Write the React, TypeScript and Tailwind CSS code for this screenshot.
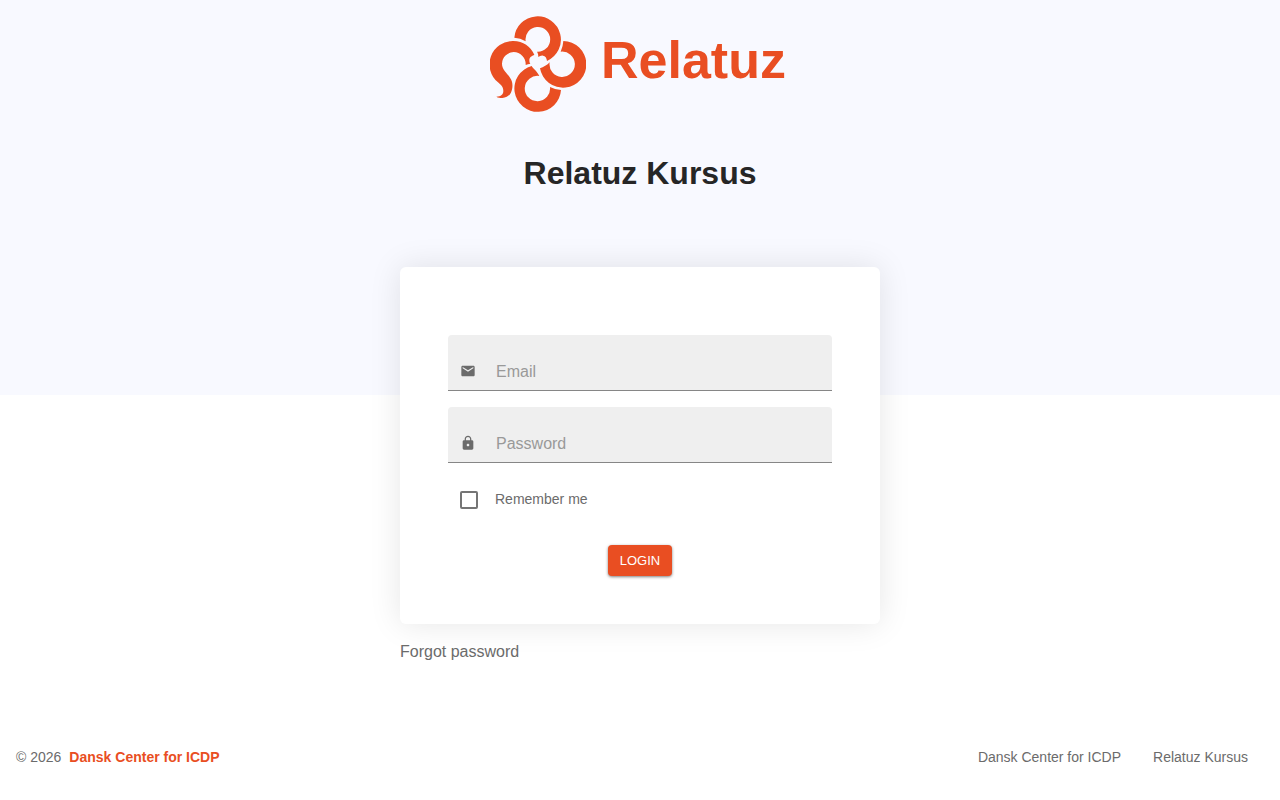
import { MdEmail, MdLock } from "react-icons/md";
import type { IconType } from "react-icons";

function Logo() {
  return (
    <div className="flex h-24 w-75 items-center gap-[15px] text-[#e94e22]">
      <svg viewBox="30 33 288 288" className="size-24 shrink-0" fill="currentColor" aria-hidden="true">
        <path d="M103 98 A70 70 0 1 1 201 168 C200 158 196 153 189 152 C183 151 179 154 175 156 C175 150 174 145 171 140 A37 37 0 1 0 137 109 Q121 99 103 98Z" />
        <path d="M250 108 A70 70 0 1 1 180 190 C190 186 202 180 209 172 A38 38 0 1 0 242 140 Q249 125 250 108Z" />
        <path d="M243 255 A70 70 0 1 1 155 183 C159 191 171 198 178 213 A38 38 0 1 0 210 246 Q225 254 243 255Z" />
        <path d="M137 180 A37 37 0 0 0 101 141 A36 36 0 0 0 66 176 C66 184 69 191 74 198 C79 205 86 211 91 220 C97 229 98 238 97 248 C95 266 84 279 67 279 C60 279 54 278 49 275 C63 275 70 268 70 258 C70 246 63 240 54 232 A70 70 0 0 1 100 108 C130 108 151 124 163 149 C158 152 149 155 148 164 C148 170 149 173 151 176 Q144 177 137 180Z" />
      </svg>
      <span className="pb-2 text-[52px] leading-[60px] font-bold">Relatuz</span>
    </div>
  );
}

type FieldProps = {
  label: string;
  type: string;
  name: string;
  icon: IconType;
};

function Field({ label, type, name, icon: Icon }: FieldProps) {
  return (
    <label className="flex h-14 items-end gap-5 rounded-t border-b border-[#868686] bg-[#efefef] px-3">
      <Icon className="mb-[11px] size-4 shrink-0 text-[#6b6b6b]" aria-hidden="true" />
      <input
        type={type}
        name={name}
        aria-label={label}
        placeholder={label}
        className="mb-1.5 h-6 min-w-0 flex-1 bg-transparent text-base text-[#262626] outline-none placeholder:text-[#999999]"
      />
    </label>
  );
}

export default function App() {
  return (
    <div className="flex min-h-screen flex-col bg-white bg-[linear-gradient(#f8f9ff,#f8f9ff)] bg-[length:100%_395px] bg-no-repeat font-['Liberation_Sans',Arial,sans-serif] text-[#6b6b6b]">
      <header className="flex flex-col items-center px-4 pt-4">
        <Logo />
        <h1 className="mt-10 text-[32px] leading-[42px] font-bold text-[#262626]">Relatuz Kursus</h1>
      </header>

      <main className="mx-auto mt-[73px] w-full max-w-[480px] flex-1">
        <form
          className="flex flex-col rounded-md bg-white px-12 pt-[68px] pb-12 shadow-[0_0_32px_rgba(0,0,0,0.1)]"
          onSubmit={(event) => event.preventDefault()}
        >
          <div className="flex flex-col gap-4">
            <Field label="Email" type="email" name="email" icon={MdEmail} />
            <Field label="Password" type="password" name="password" icon={MdLock} />
          </div>
          <label className="mt-7 flex h-[18px] items-center gap-[17px] self-start pl-3 text-sm leading-4">
            <input
              type="checkbox"
              name="remember"
              className="size-[18px] shrink-0 appearance-none rounded-xs border-2 border-[#757575] checked:border-[#e94e22] checked:bg-[#e94e22]"
            />
            <span className="pb-0.5">Remember me</span>
          </label>
          <button
            type="submit"
            className="mt-9 h-[31px] w-16 self-center rounded bg-[#e94e22] text-[13px] text-white shadow-[0_1px_3px_rgba(0,0,0,0.5)]"
          >
            LOGIN
          </button>
        </form>
        <a href="#forgot" className="mt-4 inline-block text-base leading-6">
          Forgot password
        </a>
      </main>

      <footer className="flex flex-wrap items-center justify-between gap-4 px-4 pb-[33px] text-sm">
        <p className="flex gap-2">
          © 2026
          <a href="#center" className="font-bold text-[#e94e22]">
            Dansk Center for ICDP
          </a>
        </p>
        <nav className="flex gap-8 pr-4">
          <a href="#about">Dansk Center for ICDP</a>
          <a href="#kursus">Relatuz Kursus</a>
        </nav>
      </footer>
    </div>
  );
}
